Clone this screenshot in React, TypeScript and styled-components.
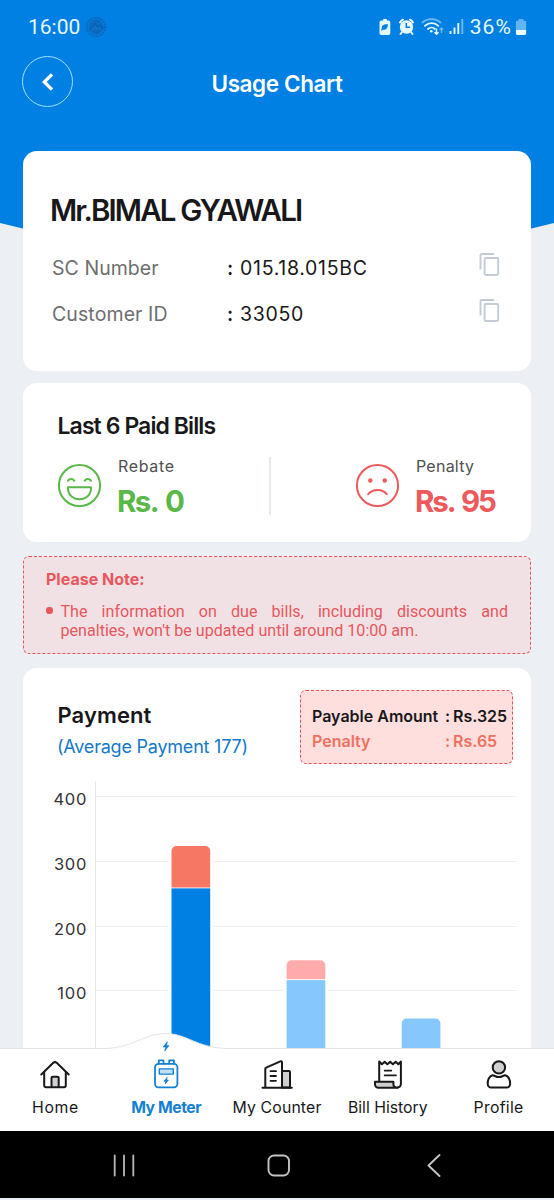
import React from 'react';
import styled, { createGlobalStyle } from 'styled-components';

const GlobalStyle = createGlobalStyle`
  * { box-sizing: border-box; }
  body { margin: 0; background: #ecf0f4; }
  svg { display: block; flex: none; }
`;

const Screen = styled.div`
  width: 554px;
  height: 1200px;
  display: flex;
  flex-direction: column;
  overflow: hidden;
  background: #ecf0f4;
  font-family: Inter, 'Liberation Sans', sans-serif;
  color: #18181a;
`;

const Content = styled.main`
  height: 1048px;
  flex: none;
  overflow: hidden;
  display: flex;
  flex-direction: column;
`;

const Header = styled.header`
  height: 290px;
  flex: none;
  background: #0080e2;
  color: #fff;
  clip-path: polygon(0 0, 100% 0, 100% 223px, 50% 290px, 0 223px);
`;

const StatusBar = styled.div`
  height: 54px;
  padding: 0 27px 0 28px;
  display: flex;
  align-items: center;
  justify-content: space-between;
  font-family: Roboto, sans-serif;
  font-size: 21px;
  color: #e6f8ff;
`;

const StatusGroup = styled.div<{ $gap: number }>`
  display: flex;
  align-items: center;
  gap: ${(p) => p.$gap}px;
`;

const StatusText = styled.span<{ $spacing: number }>`
  letter-spacing: ${(p) => p.$spacing}px;
`;

const TitleBar = styled.div`
  height: 55px;
  padding: 0 22px;
  display: grid;
  grid-template-columns: 51px 1fr 51px;
  align-items: center;
`;

const BackButton = styled.button`
  width: 51px;
  height: 51px;
  padding: 0;
  border: 1px solid #9fe0ff;
  border-radius: 50%;
  background: none;
  display: grid;
  place-items: center;
`;

const Title = styled.h1`
  margin: 5px 0 0;
  font-size: 22.5px;
  line-height: 30px;
  font-weight: 600;
  letter-spacing: -0.4px;
  text-align: center;
`;

const Cards = styled.div`
  position: relative;
  margin: -139px 23px 0;
  display: flex;
  flex-direction: column;
`;

const Card = styled.section<{ $height: number; $gap: number; $pad: string }>`
  height: ${(p) => p.$height}px;
  margin-bottom: ${(p) => p.$gap}px;
  padding: ${(p) => p.$pad};
  border-radius: 14px;
  background: #fff;
`;

const Name = styled.h2`
  margin: 0 0 15px -2px;
  font-size: 29.5px;
  line-height: 40px;
  font-weight: 600;
  letter-spacing: -1.85px;
  white-space: nowrap;
`;

const InfoRow = styled.div`
  height: 46px;
  display: flex;
  align-items: center;
  font-size: 19.5px;
`;

const InfoLabel = styled.span<{ $spacing: number }>`
  width: 175px;
  color: #6e6e70;
  letter-spacing: ${(p) => p.$spacing}px;
`;

const InfoColon = styled.span`
  width: 13px;
  font-weight: 600;
`;

const InfoValue = styled.span`
  flex: 1;
  letter-spacing: 0.7px;
`;

const CopyButton = styled.button`
  padding: 0;
  margin-bottom: 7px;
  border: 0;
  background: none;
`;

const SectionTitle = styled.h3<{ $size: number; $spacing: number; $line: number }>`
  margin: 0 0 0 -0.5px;
  font-size: ${(p) => p.$size}px;
  line-height: ${(p) => p.$line}px;
  font-weight: 600;
  letter-spacing: ${(p) => p.$spacing}px;
  white-space: nowrap;
`;

const BillsRow = styled.div`
  margin-top: 14px;
  display: flex;
  align-items: flex-start;
`;

const BillItem = styled.div<{ $color: string }>`
  width: 213px;
  margin-left: -1px;
  flex: none;
  display: flex;
  gap: 16px;
  color: ${(p) => p.$color};

  svg { margin-top: 9px; }
`;

const BillLabel = styled.div<{ $spacing: number }>`
  font-size: 16px;
  line-height: 25px;
  color: #505052;
  letter-spacing: ${(p) => p.$spacing}px;
`;

const BillAmount = styled.div<{ $spacing: number }>`
  margin-left: -1px;
  font-size: 29.5px;
  line-height: 44px;
  font-weight: 700;
  white-space: nowrap;
  letter-spacing: ${(p) => p.$spacing}px;
  word-spacing: 2.5px;
`;

const Divider = styled.div`
  width: 2px;
  height: 58px;
  margin: 3px 85px 0 -1px;
  flex: none;
  background: #e6e9ee;
`;

const Note = styled.aside`
  height: 98px;
  margin-bottom: 14px;
  padding: 12px 22px;
  border: 1px dashed #e4575c;
  border-radius: 6px;
  background: #f1e1e5;
  color: #e8575d;
`;

const NoteTitle = styled.h4`
  margin: 0 0 13px 0;
  font-size: 16px;
  line-height: 21px;
  font-weight: 700;
`;

const NoteBody = styled.div`
  display: flex;
  gap: 8px;
  font-family: Roboto, sans-serif;
  font-size: 16.1px;
  line-height: 18.75px;
`;

const Bullet = styled.span`
  width: 6.5px;
  height: 6.5px;
  margin-top: 4px;
  flex: none;
  border-radius: 50%;
  background: currentColor;
`;

const NoteText = styled.p`
  margin: 0;
  flex: 1;
  text-align: justify;
`;

const PaymentHead = styled.div`
  height: 80px;
  padding: 0 18px 0 35px;
  display: flex;
  justify-content: space-between;
`;

const PaymentTitles = styled.div`
  padding-top: 5px;
`;

const Average = styled.div`
  margin-left: -1px;
  font-size: 18px;
  line-height: 24px;
  letter-spacing: -0.22px;
  color: #1479c9;
`;

const Summary = styled.div`
  width: 213px;
  height: 74px;
  padding: 13px 4px 0 11px;
  border: 1px dashed #e4505a;
  border-radius: 6px;
  background: #ffdfde;
`;

const SummaryRow = styled.div<{ $color: string }>`
  display: grid;
  grid-template-columns: 133px 8px 1fr;
  font-size: 16px;
  line-height: 24.5px;
  font-weight: 600;
  white-space: nowrap;
  color: ${(p) => p.$color};
`;

const AxisLabel = styled.text`
  font-family: Inter, sans-serif;
  font-size: 16.5px;
  letter-spacing: 0.8px;
  fill: #333336;
`;

const Nav = styled.nav`
  position: relative;
  height: 83px;
  flex: none;
  display: grid;
  grid-template-columns: repeat(5, 1fr);
  background: #fff;
  border-top: 1px solid #e4e5e6;
`;

const Wave = styled.svg`
  position: absolute;
  left: 100px;
  top: -18px;
`;

const NavItem = styled.a<{ $active?: boolean; $spacing: number }>`
  position: relative;
  padding-top: 8px;
  display: flex;
  flex-direction: column;
  align-items: center;
  gap: 4px;
  font-size: 15.8px;
  line-height: 22px;
  font-weight: ${(p) => (p.$active ? 700 : 400)};
  letter-spacing: ${(p) => p.$spacing}px;
  color: ${(p) => (p.$active ? '#1580d3' : '#18181a')};
  white-space: nowrap;
`;

const SystemBar = styled.div`
  height: 67px;
  flex: none;
  padding: 2px 42px 0 46px;
  display: grid;
  grid-template-columns: repeat(3, 155px);
  place-items: center;
  background: #000;
`;

const stroke = {
  fill: 'none',
  stroke: 'currentColor',
  strokeLinecap: 'round' as const,
  strokeLinejoin: 'round' as const,
};

const Emblem = () => (
  <svg width="22" height="22" viewBox="-11 -11 22 22" fill="none" stroke="#0c62b0">
    <circle r="9.3" strokeWidth="1.6" strokeDasharray="1.6 1" />
    <circle r="7" strokeWidth="0.8" fill="#0b70c8" />
    <path d="M-7 3 L-3 -1 L-1 -4 L2 0 L4 -2 L7 2" strokeWidth="1.6" />
    <path d="M-5 -3h3M-4 4h8M-2 6h5M1 -5h3" strokeWidth="1.2" />
  </svg>
);

const StatusIcons = () => (
  <svg width="86" height="20" viewBox="377 17 86 20" fill="none">
    <path d="M381 20.5h1.2V19h3.6v1.5h1.7a1.8 1.8 0 0 1 1.8 1.8v10.9a1.8 1.8 0 0 1-1.8 1.8h-7.2a1.8 1.8 0 0 1-1.8-1.8V22.3a1.8 1.8 0 0 1 1.8-1.8z" fill="#e6f8ff" />
    <path d="M387 24.3c-4-.3-6.500 1-6.300 4.600l-.9 1.600h1.200l.7-.8c3.300.8 5.200-1.500 5.300-5.400z" fill="#0080e2" />
    <circle cx="405.5" cy="27" r="6.7" fill="#e6f8ff" />
    <path d="M399 22.500a7 7 0 0 1 3-2.800M412 22.500a7 7 0 0 0-3-2.800M401 32l-1.500 2M410 32l1.500 2" stroke="#e6f8ff" strokeWidth="2" strokeLinecap="round" />
    <path d="M405.300 23v4.300h3.800" stroke="#0080e2" strokeWidth="1.5" />
    <path d="M421.500 22.500c5-4.500 13-4.500 18 0" stroke="#6ebcf5" strokeWidth="1.8" strokeLinecap="round" />
    <path d="M424 25.800c4-3.500 9.500-3.500 13.300 0M427 29c2-1.900 5-1.900 7 0" stroke="#e6f8ff" strokeWidth="1.8" strokeLinecap="round" />
    <circle cx="430.3" cy="31.3" r="1.3" fill="#e6f8ff" />
    <path d="M435.500 28.500v5.500M433.500 32.200l2 2 2-2" stroke="#e6f8ff" strokeWidth="1.5" />
    <path d="M440.500 33v-5M438.700 29.600l1.800-1.800 1.800 1.800" stroke="#6ebcf5" strokeWidth="1.3" />
    <path d="M449.500 31v3M453.500 27.500v6.500M457.300 23v11" stroke="#e6f8ff" strokeWidth="1.9" />
    <path d="M461.300 19v15" stroke="#6ebcf5" strokeWidth="1.8" />
  </svg>
);

const Battery = () => (
  <svg width="12" height="18" viewBox="515 18 12 18">
    <path d="M517.200 20.800h1.300V19h5v1.800h1.300a1.300 1.300 0 0 1 1.300 1.300v8h-10.200v-8a1.300 1.300 0 0 1 1.300-1.300z" fill="#62b5f3" />
    <path d="M515.900 30h10.200v3.600a1.400 1.400 0 0 1-1.400 1.400h-7.400a1.400 1.400 0 0 1-1.400-1.400z" fill="#f2fcff" />
  </svg>
);

const CopyIcon = () => (
  <svg width="22" height="25" viewBox="478 252 22 25" {...stroke} stroke="#c3ccd6" strokeWidth="1.9" strokeLinecap="butt">
    <path d="M480.500 269.500V255.200a1.200 1.200 0 0 1 1.200-1.200H494" />
    <rect x="484.6" y="258" width="13.6" height="17" rx="1.2" />
  </svg>
);

const HappyFace = () => (
  <svg width="45" height="45" viewBox="-22.5 -22.5 45 45" {...stroke} strokeWidth="2">
    <circle r="20.6" />
    <path d="M-11.500 -4.700c1.300-2.300 5-2.300 6.300 0M5.200 -4.700c1.300-2.300 5-2.300 6.300 0" />
    <path d="M-11.500 1.800h23c.4 7-4.500 12-11.500 12s-11.900-5-11.500-12z" />
  </svg>
);

const SadFace = () => (
  <svg width="45" height="45" viewBox="-22.5 -22.5 45 45" {...stroke} strokeWidth="2">
    <circle r="20.6" />
    <circle cx="-7.2" cy="-5" r="1.5" fill="currentColor" strokeWidth="1.5" />
    <circle cx="7.2" cy="-5" r="1.5" fill="currentColor" strokeWidth="1.5" />
    <path d="M-9.300 8.700c4.500-5.600 14.100-5.600 18.600 0" />
  </svg>
);

const TICKS = [400, 300, 200, 100];
const BARS = [
  { x: 171.5, bill: 260, penalty: 65, fill: '#0080e2', cap: '#f67864' },
  { x: 286.6, bill: 118, penalty: 30, fill: '#86c8fe', cap: '#ffabab' },
  { x: 401.7, bill: 58, penalty: 0, fill: '#86c8fe', cap: '#ffabab' },
];
const yFor = (value: number) => 1056 - value * 0.6463;
const barTop = (x: number, y: number, bottom: number) =>
  `M${x} ${bottom}V${y + 5}a5 5 0 0 1 5-5h28.7a5 5 0 0 1 5 5V${bottom}z`;

const PaymentChart = () => (
  <svg width="508" height="290" viewBox="23 770 508 290">
    <g stroke="#eff0f1" strokeWidth="1">
      {TICKS.map((t) => (
        <path key={t} d={`M95 ${Math.round(yFor(t)) - 0.5}H517`} />
      ))}
    </g>
    <path d="M95.500 781V1060" stroke="#e6e7e9" />
    {TICKS.map((t) => (
      <AxisLabel key={t} x="87.3" y={yFor(t) + 7.8} textAnchor="end">{t}</AxisLabel>
    ))}
    {BARS.map((b) => {
      const split = yFor(b.bill);
      const top = yFor(b.bill + b.penalty);
      return (
        <g key={b.x}>
          <rect x={b.x - 2} y={top} width="42.7" height="290" fill="#fff" />
          {b.penalty > 0 ? (
            <>
              <path d={barTop(b.x, top, split - 0.5)} fill={b.cap} />
              <rect x={b.x} y={split + 0.4} width="38.7" height="290" fill={b.fill} />
            </>
          ) : (
            <path d={barTop(b.x, top, 1060)} fill={b.fill} />
          )}
        </g>
      );
    })}
  </svg>
);

const navSvg = { width: 40, height: 36, viewBox: '0 0 40 36', ...stroke, strokeWidth: 2 };

const HomeIcon = () => (
  <svg {...navSvg}>
    <path d="M16.500 30v-9a1.300 1.300 0 0 1 1.300-1.300h4.600a1.300 1.300 0 0 1 1.300 1.300v9" fill="#cfcfd1" />
    <path d="M6.300 17.500L18.300 5.800q1.700-1.300 3.400 0L33.700 17.500" />
    <path d="M9.200 15.500v13a1.800 1.800 0 0 0 1.800 1.800h18a1.800 1.800 0 0 0 1.800-1.800v-13" />
  </svg>
);

const MeterIcon = () => (
  <svg {...navSvg} strokeWidth={1.8}>
    <rect x="9" y="6.8" width="22.4" height="23.5" rx="3.5" />
    <path d="M12.800 6.500V3.300h4.700v3.200M23.200 6.500V3.300h4.700v3.200" />
    <rect x="13.3" y="11.9" width="14" height="5.2" fill="#bfe0f8" strokeWidth="1.4" />
    <path d="M21 20.600l-3 3.600h1.800l-.6 2.700 3.200-3.900h-1.900z" fill="currentColor" strokeWidth="0.8" />
  </svg>
);

const CounterIcon = () => (
  <svg {...navSvg}>
    <path d="M25 14h7a1 1 0 0 1 1 1v15.500h-8z" fill="#cfcfd1" />
    <path d="M8.300 30.500V11.800a1.200 1.200 0 0 1 .8-1.100L23.400 4.400a1.100 1.100 0 0 1 1.600 1v25.100M5.500 30.700h29.300" />
    <path d="M13.500 14.200h5.500M13.500 19h5.500M13.500 23.800h5.500" strokeWidth="1.8" />
  </svg>
);

const BillIcon = () => (
  <svg {...navSvg}>
    <path d="M11.200 24V4.500l2.700 2.800 2.800-2.600 2.700 2.600 2.800-2.600 2.700 2.600 2.800-2.600 2.700 2.600 2.500-2.800V27a3.600 3.600 0 0 1-3.600 3.600" />
    <path d="M7 24.700h18.400v2.500a3.500 3.500 0 0 0 4 3.500H10.500A3.500 3.500 0 0 1 7 27.200z" fill="#cfcfd1" />
    <path d="M16.700 13.600h6.600M16.700 18.400h11.200" strokeWidth="1.8" />
  </svg>
);

const ProfileIcon = () => (
  <svg {...navSvg}>
    <circle cx="19.9" cy="10.4" r="6.2" fill="#cfcfd1" />
    <path d="M13.500 18.200c2 .2 3.500 1.900 6.400 1.900s4.400-1.700 6.400-1.900c3.300.8 5 5 4.800 8.900a3.500 3.500 0 0 1-3.600 3.500H12.300a3.500 3.500 0 0 1-3.600-3.500c-.2-3.900 1.500-8.100 4.800-8.900z" />
  </svg>
);

export default function App() {
  return (
    <Screen>
      <GlobalStyle />
      <Content>
        <Header>
          <StatusBar>
            <StatusGroup $gap={5}>
              <StatusText $spacing={0}>16:00</StatusText>
              <Emblem />
            </StatusGroup>
            <StatusGroup $gap={6}>
              <StatusIcons />
              <StatusGroup $gap={3}>
                <StatusText $spacing={1.1}>36%</StatusText>
                <Battery />
              </StatusGroup>
            </StatusGroup>
          </StatusBar>
          <TitleBar>
            <BackButton aria-label="Back">
              <svg width="20" height="24" viewBox="0 0 20 24" {...stroke} stroke="#fff" strokeWidth="3.3" strokeLinecap="butt" strokeLinejoin="miter">
                <path d="M14 4.300L6.300 12l7.700 7.700" />
              </svg>
            </BackButton>
            <Title>Usage Chart</Title>
          </TitleBar>
        </Header>
        <Cards>
          <Card $height={220} $gap={12} $pad="39px 31px 0 29px">
            <Name>Mr.BIMAL GYAWALI</Name>
            <InfoRow>
              <InfoLabel $spacing={0.05}>SC Number</InfoLabel>
              <InfoColon>:</InfoColon>
              <InfoValue>015.18.015BC</InfoValue>
              <CopyButton aria-label="Copy SC number"><CopyIcon /></CopyButton>
            </InfoRow>
            <InfoRow>
              <InfoLabel $spacing={0.1}>Customer ID</InfoLabel>
              <InfoColon>:</InfoColon>
              <InfoValue>33050</InfoValue>
              <CopyButton aria-label="Copy customer ID"><CopyIcon /></CopyButton>
            </InfoRow>
          </Card>
          <Card $height={159} $gap={14} $pad="29px 20px 0 35px">
            <SectionTitle $size={23} $spacing={-0.91} $line={28}>Last 6 Paid Bills</SectionTitle>
            <BillsRow>
              <BillItem $color="#5ab848">
                <HappyFace />
                <div>
                  <BillLabel $spacing={0.65}>Rebate</BillLabel>
                  <BillAmount $spacing={-1.6}>Rs. 0</BillAmount>
                </div>
              </BillItem>
              <Divider />
              <BillItem $color="#ee5a5c">
                <SadFace />
                <div>
                  <BillLabel $spacing={0.24}>Penalty</BillLabel>
                  <BillAmount $spacing={-2.1}>Rs. 95</BillAmount>
                </div>
              </BillItem>
            </BillsRow>
          </Card>
          <Note>
            <NoteTitle>Please Note:</NoteTitle>
            <NoteBody>
              <Bullet />
              <NoteText>
                The information on due bills, including discounts and penalties, won't be updated until around 10:00 am.
              </NoteText>
            </NoteBody>
          </Note>
          <Card $height={420} $gap={0} $pad="22px 0 0">
            <PaymentHead>
              <PaymentTitles>
                <SectionTitle $size={22} $spacing={0.09} $line={40}>Payment</SectionTitle>
                <Average>(Average Payment 177)</Average>
              </PaymentTitles>
              <Summary>
                <SummaryRow $color="#18181a"><span>Payable Amount</span><span>:</span><span>Rs.325</span></SummaryRow>
                <SummaryRow $color="#f0705f"><span>Penalty</span><span>:</span><span>Rs.65</span></SummaryRow>
              </Summary>
            </PaymentHead>
            <PaymentChart />
          </Card>
        </Cards>
      </Content>
      <Nav>
        <Wave width="134" height="24" viewBox="100 1031 134 24">
          <path d="M104 1048.500C134 1048 142 1034 166 1033.500C188 1034 196 1048 228 1048.500V1055H104z" fill="#fff" />
          <path d="M104 1048.500C134 1048 142 1034 166 1033.500C188 1034 196 1048 228 1048.500" fill="none" stroke="#e4e5e6" />
          <path d="M167.400 1041.500l-4.400 5.500h2.500l-.8 4.200 4.400-5.700h-2.400z" fill="#1580d3" stroke="#1580d3" strokeWidth="0.5" />
        </Wave>
        <NavItem $spacing={0.6}><HomeIcon />Home</NavItem>
        <NavItem $active $spacing={-0.45}><MeterIcon />My Meter</NavItem>
        <NavItem $spacing={0.15}><CounterIcon />My Counter</NavItem>
        <NavItem $spacing={0}><BillIcon />Bill History</NavItem>
        <NavItem $spacing={0.3}><ProfileIcon />Profile</NavItem>
      </Nav>
      <SystemBar>
        <svg width="24" height="24" viewBox="0 0 24 24" {...stroke} stroke="#b9b9b9" strokeWidth="1.8">
          <path d="M2.700 1.500v20M12 1.500v20M21.300 1.500v20" />
        </svg>
        <svg width="24" height="24" viewBox="0 0 24 24" {...stroke} stroke="#c4c4c4" strokeWidth="1.9">
          <rect x="1.5" y="1.5" width="20.5" height="20" rx="5.5" />
        </svg>
        <svg width="24" height="24" viewBox="0 0 24 24" {...stroke} stroke="#c4c4c4" strokeWidth="1.9">
          <path d="M17.500 1L6.500 11.500l11 10.500" />
        </svg>
      </SystemBar>
    </Screen>
  );
}
